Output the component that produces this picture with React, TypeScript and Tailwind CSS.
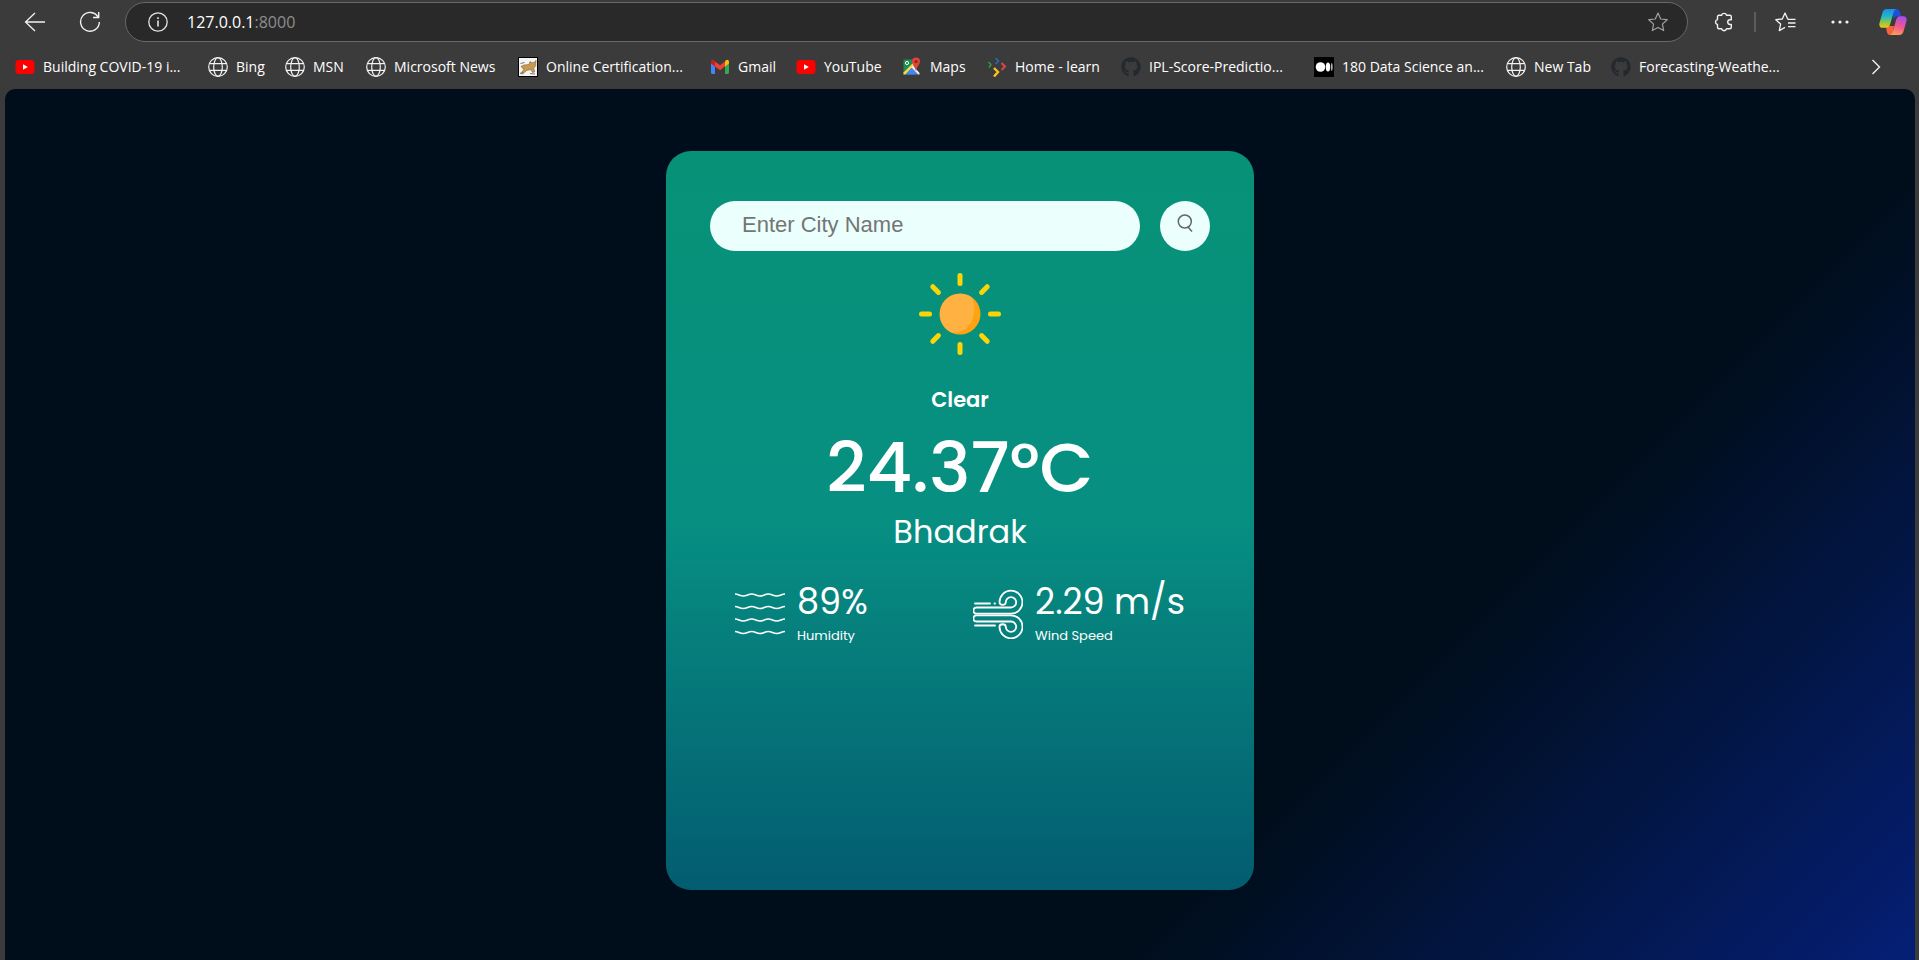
import type { ReactNode } from "react";
import { FaGithub } from "react-icons/fa";

function Globe() {
  return (
    <svg viewBox="0 0 20 20" className="size-5" fill="none" stroke="#f2f2f2" strokeWidth="1.2">
      <circle cx="10" cy="10" r="9.3" />
      <ellipse cx="10" cy="10" rx="4.3" ry="9.3" />
      <path d="M1.5 6.6h17M1.5 13.4h17" />
    </svg>
  );
}

function YouTubeMark() {
  return (
    <svg viewBox="0 0 20 20" className="size-5">
      <rect x="0.5" y="3" width="19" height="14" rx="3.5" fill="#f00" />
      <path d="M8 7.2v5.6l4.8-2.8z" fill="#fff" />
    </svg>
  );
}

function CatMark() {
  return (
    <svg viewBox="0 0 20 20" className="size-5">
      <rect x="0.5" y="0.5" width="19" height="19" fill="#f4f4f2" stroke="#000" />
      <path d="M3 9.5L6 8l5-.5 1-3 2 1.2 2-.2 2-2.2-.3 5.5-2 2.4 1 3.6-2 .8-2-3-4 .8-4 3.6-2-.5 3-4z" fill="#c79a50" stroke="#6d5530" strokeWidth="0.5" />
      <path d="M2.5 6.5l4-1M2 16.5l3-1M12 16.5l5 .5" stroke="#777" strokeWidth="1" />
    </svg>
  );
}

function GmailMark() {
  return (
    <svg viewBox="0 0 20 20" className="size-5">
      <path d="M1 6v9.5c0 .8.6 1.5 1.4 1.5H5V8.6z" fill="#4285f4" />
      <path d="M19 6v9.5c0 .8-.6 1.5-1.4 1.5H15V8.6z" fill="#34a853" />
      <path d="M15 4.5v5l4-3V5c0-2-2-2.8-3.4-1.5z" fill="#fbbc04" />
      <path d="M5 4.5v5l-4-3V5c0-2 2-2.8 3.4-1.5z" fill="#c5221f" />
      <path d="M5 4.5l5 3.8 5-3.8v5l-5 3.8-5-3.8z" fill="#ea4335" />
    </svg>
  );
}

function MapsMark() {
  return (
    <svg viewBox="0 0 20 20" className="size-5">
      <path d="M1.5 2.5H14v15H1.5z" fill="#1e8e4e" />
      <path d="M1.5 15.5L13 4l1.5 2L3.5 17.5h-2z" fill="#fdd14b" />
      <path d="M9 10.5l2-2 6.5 7.5v1.5h-1.5z" fill="#eee" />
      <path d="M9.8 10.8l-6.3 6.7H16z" fill="#4285f4" />
      <path d="M14 0.5a4 4 0 0 1 4 4c0 3-3 4.5-3.7 9h-.6c-.7-4.5-3.7-6-3.7-9a4 4 0 0 1 4-4z" fill="#e04436" />
      <circle cx="14" cy="4.5" r="1.5" fill="#8d2018" />
      <circle cx="5" cy="6" r="1.6" fill="none" stroke="#fff" strokeWidth="1" />
    </svg>
  );
}

function LearnMark() {
  return (
    <svg viewBox="0 0 20 20" className="size-5" fill="none">
      <path d="M1.5 5L4 7.5 2 10.5" stroke="#2e9b48" strokeWidth="1.5" />
      <path d="M8.5 1l3 3-3 3" stroke="#1c6fb5" strokeWidth="1.7" />
      <path d="M14.5 6l3.5 3.5-3.5 3.5" stroke="#e0434b" strokeWidth="2" />
      <path d="M7 11l4 4-4 4.5" stroke="#fcc21b" strokeWidth="2.4" />
    </svg>
  );
}

function MediumMark() {
  return (
    <svg viewBox="0 0 20 20" className="size-5">
      <path d="M0 0h20v20H0z" fill="#000" />
      <circle cx="6.5" cy="10" r="4.8" fill="#fff" />
      <ellipse cx="14" cy="10" rx="2.2" ry="4.5" fill="#fff" />
      <ellipse cx="17.8" cy="10" rx="0.8" ry="4" fill="#bbb" />
    </svg>
  );
}

const github = <FaGithub className="size-5 text-[#24292f]" />;

const bookmarks: { label: string; icon: ReactNode; width: string }[] = [
  { label: "Building COVID-19 i...", icon: <YouTubeMark />, width: "w-[193px]" },
  { label: "Bing", icon: <Globe />, width: "w-[77px]" },
  { label: "MSN", icon: <Globe />, width: "w-[81px]" },
  { label: "Microsoft News", icon: <Globe />, width: "w-[152px]" },
  { label: "Online Certification...", icon: <CatMark />, width: "w-[192px]" },
  { label: "Gmail", icon: <GmailMark />, width: "w-[86px]" },
  { label: "YouTube", icon: <YouTubeMark />, width: "w-[106px]" },
  { label: "Maps", icon: <MapsMark />, width: "w-[85px]" },
  { label: "Home - learn", icon: <LearnMark />, width: "w-[134px]" },
  { label: "IPL-Score-Predictio...", icon: github, width: "w-[193px]" },
  { label: "180 Data Science an...", icon: <MediumMark />, width: "w-[192px]" },
  { label: "New Tab", icon: <Globe />, width: "w-[105px]" },
  { label: "Forecasting-Weathe...", icon: github, width: "w-[193px]" },
];

function CopilotMark() {
  return (
    <svg viewBox="0 0 28 26" className="h-[26px] w-7">
      <defs>
        <linearGradient id="cool" x1="0" y1="0" x2="0" y2="1">
          <stop offset="0" stopColor="#1b8cf0" />
          <stop offset="0.4" stopColor="#22b8c8" />
          <stop offset="0.7" stopColor="#8bc84a" />
          <stop offset="1" stopColor="#f6c516" />
        </linearGradient>
        <linearGradient id="warm" x1="0.6" y1="0" x2="0.3" y2="1">
          <stop offset="0" stopColor="#a84df0" />
          <stop offset="0.5" stopColor="#f0568c" />
          <stop offset="1" stopColor="#fda05a" />
        </linearGradient>
      </defs>
      <path d="M14 0h3.5c2 0 3 1.5 3.5 3l1.2 4.5h-4c-2 0-3 1-3.5 3z" fill="#1c50d8" />
      <path d="M7 18l3-1h5l-1.5 9H11c-2 0-2.7-1.5-3.2-3.5z" fill="#f5653a" />
      <path d="M7.5 0H18c-2 0-2.8 1.5-3.4 3.5l-3.6 12c-.7 2.2-2 3.3-4 3.3H3.5C1 18.8-.2 16.5.5 14L3.5 3.5C4.2 1.2 5.5 0 7.5 0z" fill="url(#cool)" />
      <path d="M20.5 26H10.5c2 0 2.8-1.5 3.4-3.5l3.2-11.5c.7-2.5 2-3.8 4-3.8h3.4c2.5 0 3.7 2.3 3 4.8l-3 10.500c-.7 2.300-2 3.500-4 3.500z" fill="url(#warm)" />
    </svg>
  );
}

const iconButton = "flex size-8 shrink-0 items-center justify-center";

function BrowserBar() {
  return (
    <header className="font-['Open_Sans','Noto_Sans',sans-serif] text-white">
      <div className="flex h-11 items-center pr-2.5 pl-[19px]">
        <button className={iconButton} aria-label="Back">
          <svg viewBox="0 0 22 22" className="size-[22px]" fill="none" stroke="#f2f2f2" strokeWidth="1.3">
            <path d="M21 11H1.5M11 2L1.5 11l9.500 9" />
          </svg>
        </button>
        <button className={iconButton + " ml-[23px]"} aria-label="Refresh">
          <svg viewBox="0 0 22 22" className="size-[22px]" fill="none" stroke="#f2f2f2" strokeWidth="1.4">
            <path d="M19.2 6.2A9.4 9.4 0 1 0 20.4 11M19.7 1v5.5H14" />
          </svg>
        </button>
        <div className="ml-[19px] flex h-10 min-w-0 flex-1 items-center rounded-full border border-[#686868] bg-[#292929] pr-[19px] pl-[22px]">
          <svg viewBox="0 0 20 20" className="size-5 shrink-0" fill="none" stroke="#e4e4e4" strokeWidth="1.3">
            <circle cx="10" cy="10" r="9.2" />
            <path d="M10 8.5v6M10 5.2V7" strokeWidth="1.6" />
          </svg>
          <p className="ml-[19px] flex-1 text-base">
            127.0.0.1<span className="text-[#8e8e8e]">:8000</span>
          </p>
          <button aria-label="Add to favorites">
            <svg viewBox="0 0 20 20" className="size-5" fill="none" stroke="#a0a0a0" strokeWidth="1.2" strokeLinejoin="round">
              <path d="M10 1l2.7 6 6.5.7-4.8 4.4 1.3 6.5-5.7-3.2-5.7 3.2 1.3-6.5L.8 7.7l6.5-.7z" />
            </svg>
          </button>
        </div>
        <button className={iconButton + " ml-5"} aria-label="Extensions">
          <svg viewBox="0 0 20 20" className="size-5" fill="none" stroke="#f2f2f2" strokeWidth="1.4" strokeLinejoin="round">
            <path d="M5 3.3h2.6a2.6 2.6 0 0 1 5 0h3.2q1.5 0 1.5 1.5v2.9h-1.2a2.4 2.4 0 0 0 0 4.8h1.2v2.8q0 1.5-1.5 1.5h-3.2a2.6 2.6 0 0 1-5 0H5q-1.5 0-1.5-1.5v-2.8a2.5 2.5 0 0 1 0-4.9V4.8Q3.5 3.3 5 3.3z" />
          </svg>
        </button>
        <span className="mr-[13px] ml-[14px] h-5 w-0.5 shrink-0 bg-[#5c5c5c]" />
        <button className={iconButton} aria-label="Favorites">
          <svg viewBox="0 0 21 20" className="h-5 w-[21px]" fill="none" stroke="#f2f2f2" strokeWidth="1.3" strokeLinejoin="round">
            <path d="M12.7 7L10 1 7.3 7 .8 7.7l4.8 4.4-1.3 6.5 5.7-3.2M12.5 7.3h8M13 11h7.5M13 14.7h7.5" />
          </svg>
        </button>
        <button className={iconButton + " ml-[23px]"} aria-label="Settings and more">
          <svg viewBox="0 0 18 4" className="h-1 w-[18px]" fill="#f2f2f2">
            <circle cx="2" cy="2" r="1.6" />
            <circle cx="9" cy="2" r="1.6" />
            <circle cx="16" cy="2" r="1.6" />
          </svg>
        </button>
        <button className={iconButton + " ml-[21px]"} aria-label="Copilot">
          <CopilotMark />
        </button>
      </div>
      <nav className="flex h-[45px] items-center pr-[27px] pl-[15px]" aria-label="Bookmarks">
        <div className="flex min-w-0 flex-1 overflow-hidden">
          {bookmarks.map((b) => (
            <a key={b.label} href="#" className={`flex shrink-0 items-center gap-2 text-sm leading-5 whitespace-nowrap ${b.width}`}>
              <span className="shrink-0">{b.icon}</span>
              {b.label}
            </a>
          ))}
        </div>
        <button className={iconButton} aria-label="More bookmarks">
          <svg viewBox="0 0 10 16" className="h-4 w-2.5" fill="none" stroke="#f2f2f2" strokeWidth="1.4">
            <path d="M1.5 1l7 7-7 7" />
          </svg>
        </button>
      </nav>
    </header>
  );
}

const rays = [0, 45, 90, 135, 180, 225, 270, 315];

function Sun() {
  return (
    <svg viewBox="0 0 82 82" className="size-[82px]">
      {rays.map((angle) => (
        <path key={angle} d="M41 2.5v8" stroke="#fdd506" strokeWidth="5" strokeLinecap="round" transform={`rotate(${angle} 41 41)`} />
      ))}
      <circle cx="41" cy="41" r="20.5" fill="#ffa312" />
      <path d="M52.8 24.2A20.5 20.5 0 1 0 32.3 59.6C51 61 60 41 52.8 24.2z" fill="#ffb242" />
    </svg>
  );
}

function HumidityIcon() {
  return (
    <svg viewBox="0 0 50 50" className="mb-1 size-[50px]" fill="none" stroke="#fff" strokeWidth="1.6">
      {[6, 18.5, 31, 43.5].map((y) => (
        <path key={y} d={`M0 ${y - 1}c3.5 0 4.5 2 8.3 2s4.7-2 8.4-2 4.6 2 8.3 2 4.7-2 8.3-2 4.7 2 8.4 2 4.8-2 8.3-2`} />
      ))}
    </svg>
  );
}

function WindIcon() {
  return (
    <svg viewBox="0 0 50 50" className="mb-1 size-[50px]" fill="none" stroke="#fff" strokeWidth="1.8" strokeLinecap="round">
      <path d="M38 18.5a5.2 5.2 0 1 0-5.2-5.2c0 3.3-6.3 3.3-6.3 0a11.5 11.5 0 1 1 11.5 11.4H3.5a2.7 2.7 0 0 1 0-6.2z" />
      <path d="M38 32.5a5.2 5.2 0 1 1-5.2 5.2c0-3.3-6.3-3.3-6.3 0A11.5 11.5 0 1 0 38 26.3H3.5a2.7 2.7 0 0 0 0 6.2z" />
      <path d="M2 14.5h15M21.5 14.5h.5M2 36.5h20" />
    </svg>
  );
}

function Stat({ icon, value, label }: { icon: ReactNode; value: string; label: string }) {
  return (
    <div className="flex items-center gap-3">
      {icon}
      <div>
        <p className="-mt-1 text-[35px] leading-[44px]">{value}</p>
        <p className="text-[13px] leading-6">{label}</p>
      </div>
    </div>
  );
}

function WeatherCard() {
  return (
    <section className="flex min-h-[739px] w-full max-w-[588px] flex-col items-center rounded-[25px] bg-[linear-gradient(#079277_0%,#078f82_50%,#035c70_100%)] px-11 pt-[50px] font-['Poppins','Inter',sans-serif] text-white">
      <form className="flex w-full items-center gap-5" onSubmit={(e) => e.preventDefault()}>
        <input
          aria-label="City name"
          placeholder="Enter City Name"
          className="h-[50px] min-w-0 flex-1 rounded-full bg-[#ebfffc] px-8 pb-0.5 font-['Liberation_Sans',sans-serif] text-[22px] text-[#555] outline-none placeholder:text-[#757575]"
        />
        <button aria-label="Search" className="flex size-[50px] shrink-0 items-center justify-center rounded-full bg-[#ebfffc] pb-1.5">
          <svg viewBox="0 0 16 18" className="h-[18px] w-4" fill="none" stroke="#666" strokeWidth="1.5">
            <circle cx="7.8" cy="7.5" r="6.5" />
            <path d="M10.5 12.5l4.5 5" />
          </svg>
        </button>
      </form>
      <div className="mt-[22px]">
        <Sun />
      </div>
      <h2 className="mt-[29px] text-[21px] leading-8 font-semibold">Clear</h2>
      <h1 className="mt-2 text-[70px] leading-[88px] font-medium">24.37°C</h1>
      <p className="text-[32px] leading-10">Bhadrak</p>
      <div className="mt-8 flex w-full justify-between px-[25px]">
        <Stat icon={<HumidityIcon />} value="89%" label="Humidity" />
        <Stat icon={<WindIcon />} value="2.29 m/s" label="Wind Speed" />
      </div>
    </section>
  );
}

export default function App() {
  return (
    <div className="flex min-h-screen flex-col bg-[#3b3b3b]">
      <BrowserBar />
      <main className="mr-1 ml-[5px] flex flex-1 justify-center rounded-t-[10px] bg-[linear-gradient(135deg,#000e1c_0%,#000e1c_72%,#051f75_100%)] pt-[62px] pb-[70px]">
        <WeatherCard />
      </main>
    </div>
  );
}
